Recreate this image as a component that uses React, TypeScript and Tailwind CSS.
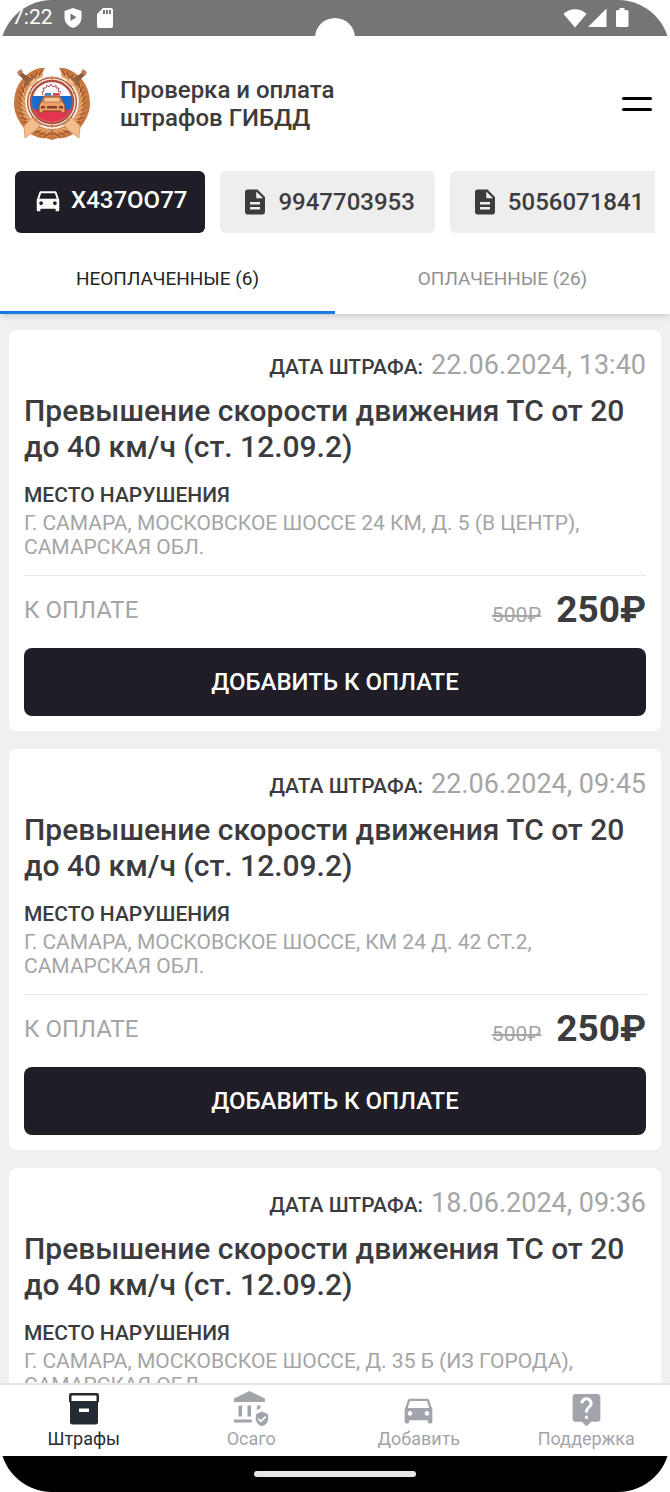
import { useState, type ReactNode } from "react";
import clsx from "clsx";
import { MdDescription, MdDirectionsCar, MdLiveHelp, MdSdCard } from "react-icons/md";

interface Fine {
  id: number;
  date: string;
  title: string;
  place: string;
  fullPrice: number;
  price: number;
}

const documents = [
  { number: "Х437ОО77", type: "car" },
  { number: "9947703953", type: "license" },
  { number: "5056071841", type: "license" },
];

const fines: Fine[] = [
  {
    id: 1,
    date: "22.06.2024, 13:40",
    title: "Превышение скорости движения ТС от 20 до 40 км/ч (ст. 12.09.2)",
    place: "Г. Самара, Московское шоссе 24 км, д. 5 (в центр), Самарская обл.",
    fullPrice: 500,
    price: 250,
  },
  {
    id: 2,
    date: "22.06.2024, 09:45",
    title: "Превышение скорости движения ТС от 20 до 40 км/ч (ст. 12.09.2)",
    place: "Г. Самара, Московское шоссе, км 24 д. 42 ст.2, Самарская обл.",
    fullPrice: 500,
    price: 250,
  },
  {
    id: 3,
    date: "18.06.2024, 09:36",
    title: "Превышение скорости движения ТС от 20 до 40 км/ч (ст. 12.09.2)",
    place: "Г. Самара, Московское шоссе, д. 35 Б (из города), Самарская обл.",
    fullPrice: 500,
    price: 250,
  },
];

const leaves = Array.from({ length: 18 }, (_, i) => i);

function Emblem() {
  return (
    <svg viewBox="0 0 76 72" className="h-[72px] w-[76px] shrink-0" aria-hidden="true">
      {[1, -1].map((side) => (
        <g key={side} transform={side === 1 ? undefined : "translate(76 0) scale(-1 1)"}>
          {/* wreath half */}
          <path d="M31 0C25-1 19 2 15 5 6 11 0 22 0 36c0 9 5 19 12 26 6 6 14 9 20 8l6 2V59C22 60 12 49 12 34c0-11 5-20 14-25z" fill="#c8773e" />
          {leaves.map((i) => (
            <g key={i} transform={`rotate(${-22 - i * 8.8} 38 35)`}>
              <path d="M33 10c0-4 4-8 8-8 0 4-3 7-8 8z" fill="#e3a166" />
              <path d="M33 5c2-3 5-5 9-5-1 3-4 5-9 5z" fill="#d98c4d" />
              <path d="M33 10c1-4 4-6 8-8M33 5c3-1 6-3 8-5" fill="none" stroke="#8f4526" strokeWidth=".8" />
            </g>
          ))}
        </g>
      ))}
      <circle cx="38" cy="34" r="27" fill="#fbeee2" />
      {/* crossed swords */}
      {[1, -1].map((side) => (
        <g key={side} transform={side === 1 ? undefined : "translate(76 0) scale(-1 1)"}>
          <path d="m14 13 5-4 47 49-1 12-11-8z" fill="#f4bd8d" stroke="#cf8b58" strokeWidth=".7" />
          <path d="m6 3 11 8-4 4L4 6z" fill="#8e5b3c" />
          <path d="m3 4 4-3 2 3-4 4z" fill="#b98058" />
          <path d="m10 16 9-9 2 2-9 10z" fill="#9d6440" />
        </g>
      ))}
      {/* shield with flag */}
      <circle cx="38" cy="34" r="25" fill="#a04a33" />
      <circle cx="38" cy="34" r="23" fill="none" stroke="#f4ddd0" strokeWidth="1.6" />
      <circle cx="38" cy="34" r="20.5" fill="#fff" stroke="#b65a45" strokeWidth="1.4" />
      <path d="M18.6 28h38.8a20 20 0 0 1-1 14H19.6a20 20 0 0 1-1-14z" fill="#1b6cd0" />
      <path d="M19.5 41.500h37a20 20 0 0 1-37 0z" fill="#e5344f" />
      {[
        [38, 10],
        [16, 25],
        [60, 25],
        [22, 52],
        [54, 52],
        [38, 58],
      ].map(([cx, cy]) => (
        <circle key={`${cx}-${cy}`} cx={cx} cy={cy} r="1.7" fill="#c47745" stroke="#f0c299" strokeWidth=".5" />
      ))}
      {/* car */}
      <path
        d="m29 27-1-3 2-1-1-3 3 0 1-3 2 2 2-3 2 3 3-2 0 3 3 0-1 3 3 1-2 3"
        fill="#fff"
        stroke="#c0475a"
        strokeWidth="1"
      />
      <path d="M31 25h6v2.500h-6z" fill="#2f87d7" />
      <path d="M39 25h6v2.500h-6z" fill="#e5405d" />
      <path d="m30 28-3 6-2 3v8h4v-2h18v2h4v-8l-2-3-3-6z" fill="#e9a264" stroke="#85402a" />
      <path d="m31 29.500-2 4.500h18l-2-4.500z" fill="#f5c593" stroke="#9b5430" strokeWidth=".6" />
      <path d="M27 38h4v2.500h-4zm18 0h4v2.500h-4zM33 38h10v2.500H33z" fill="#8f3931" />
    </svg>
  );
}

function ArchiveIcon() {
  return (
    <svg viewBox="0 0 32 32" className="size-8" fill="currentColor" aria-hidden="true">
      <path
        fillRule="evenodd"
        d="M3 0h26a2 2 0 0 1 2 2v6a2 2 0 0 1-1 1.700V29a2.500 2.500 0 0 1-2.500 2.500h-23A2.500 2.500 0 0 1 2 29V9.700A2 2 0 0 1 1 8V2a2 2 0 0 1 2-2zm.5 2.500v5.500h25V2.500zM11 15.500v3.500h10v-3.500z"
      />
    </svg>
  );
}

function InsuranceIcon() {
  return (
    <svg viewBox="0 0 36 36" className="size-9" fill="currentColor" aria-hidden="true">
      <path d="M16.500 0 32 7.500V11H1V7.500zM5.500 14.500h3.500v11H5.500zm9 0H18v11h-3.500zm9.500 0h3.500V17L24 19zM1 28.500h17.500c0 1.200.300 2.200.900 3H1z" />
      <path d="m29 20.500 6.200 2.700v4.300c0 3.600-2.500 6.800-6.200 7.800-3.700-1-6.200-4.200-6.200-7.800v-4.300z" />
      <path d="m25.500 27.800 2.500 2.500 4.700-4.700" fill="none" stroke="#fff" strokeWidth="1.8" />
    </svg>
  );
}

function StatusBar() {
  return (
    <div className="relative flex h-9 shrink-0 items-center justify-between bg-[#757575] pr-[41px] pl-3 text-white">
      <div className="flex items-center">
        <span className="text-[21px]">7:22</span>
        <svg viewBox="0 0 20 22" className="ml-2.5 h-[22px] w-5" aria-hidden="true">
          <path d="m10 1 8.500 3v6.500c0 5-3.500 9-8.500 10.500C5 19.500 1.500 15.500 1.500 10.500V4z" fill="currentColor" />
          <path d="M7.500 6.500v7.500l6-3.750z" fill="#757575" />
        </svg>
        <MdSdCard className="ml-2.5 size-6" />
      </div>
      <div className="flex items-center">
        <svg viewBox="0 0 24 20" className="h-5 w-6" fill="currentColor" aria-hidden="true">
          <path d="M.5 6C6-.500 18-.500 23.500 6L12 19.500z" />
        </svg>
        <svg viewBox="0 0 20 20" className="h-5 w-5" fill="currentColor" aria-hidden="true">
          <path d="M19.500.500v18.500H1z" />
        </svg>
        <svg viewBox="0 0 14 20" className="ml-2 h-5 w-3.5" fill="currentColor" aria-hidden="true">
          <path d="M4.500 0h5v2H12a1.500 1.500 0 0 1 1.500 1.500v14A1.500 1.500 0 0 1 12 19H2.500A1.500 1.500 0 0 1 1 17.500v-14A1.500 1.500 0 0 1 2.500 2h2z" />
        </svg>
      </div>
      {/* camera cutout */}
      <div className="absolute top-[18px] left-1/2 size-10 -translate-x-1/2 rounded-full bg-white" />
    </div>
  );
}

function FineCard({ fine }: { fine: Fine }) {
  return (
    <article className="shrink-0 rounded-lg bg-white p-[15px] pt-[17px]">
      <div className="flex items-baseline justify-end gap-2 leading-9">
        <span className="text-[21px] font-medium uppercase">Дата штрафа:</span>
        <time className="text-[27px] text-[#a5a5a5]">{fine.date}</time>
      </div>
      <h2 className="mt-2 text-[30px] leading-9 font-medium">{fine.title}</h2>
      <h3 className="mt-[18px] text-[21px] leading-6 font-medium uppercase">Место нарушения</h3>
      <p className="mt-1 text-[21px] leading-6 text-[#a5a5a5] uppercase">{fine.place}</p>
      <div className="mt-4 flex h-[73px] items-center justify-between border-t border-[#e8e8e8] pb-1">
        <span className="text-2xl text-[#a5a5a5] uppercase">К оплате</span>
        <div className="flex items-baseline gap-[15px]">
          <s className="text-[21px] text-[#a5a5a5]">{fine.fullPrice}₽</s>
          <strong className="text-[37px] font-bold">{fine.price}₽</strong>
        </div>
      </div>
      <button type="button" className="h-[68px] w-full rounded-lg bg-[#201d26] text-2xl font-medium text-white uppercase">
        Добавить к оплате
      </button>
    </article>
  );
}

function NavItem({ label, active, children }: { label: string; active?: boolean; children: ReactNode }) {
  return (
    <a
      href="#"
      className={clsx(
        "flex flex-1 flex-col items-center pt-1.5 text-lg",
        active ? "text-[#222b31]" : "text-[#a2a4ab]"
      )}
    >
      <span className="flex h-9 items-center justify-center">{children}</span>
      <span className="leading-6">{label}</span>
    </a>
  );
}

export default function App() {
  const [selected, setSelected] = useState(0);
  const [tab, setTab] = useState("unpaid");

  return (
    <div className="flex h-screen flex-col overflow-hidden rounded-[52px] bg-white font-[Roboto,sans-serif] text-[#3c3c3e]">
      <StatusBar />

      <header className="flex shrink-0 items-center pt-8 pr-[18px] pb-[31px] pl-3.5">
        <Emblem />
        <h1 className="ml-[30px] text-2xl leading-7 font-medium">
          Проверка и оплата
          <br />
          штрафов ГИБДД
        </h1>
        <button type="button" aria-label="Меню" className="ml-auto flex flex-col gap-2 py-3">
          <span className="h-[3px] w-[30px] rounded-full bg-black" />
          <span className="h-[3px] w-[30px] rounded-full bg-black" />
        </button>
      </header>

      <div className="mx-[15px] flex shrink-0 gap-[15px] overflow-hidden">
        {documents.map((doc, i) => (
          <button
            key={doc.number}
            type="button"
            onClick={() => setSelected(i)}
            className={clsx(
              "flex h-[62px] shrink-0 items-center gap-2 rounded-md text-2xl font-medium",
              i === selected ? "bg-[#201d26] px-[18px] pb-1 text-white" : "bg-[#eeeeee] px-5"
            )}
          >
            {doc.type === "car" ? <MdDirectionsCar className="size-[30px]" /> : <MdDescription className="size-[30px]" />}
            {doc.number}
          </button>
        ))}
      </div>

      <div role="tablist" className="relative z-10 mt-3 flex h-[69px] shrink-0 bg-white text-[19px] shadow-md">
        <button
          type="button"
          role="tab"
          aria-selected={tab === "unpaid"}
          onClick={() => setTab("unpaid")}
          className={clsx(
            "flex-1 border-b-3 pt-0.5 uppercase",
            tab === "unpaid" ? "border-[#177be6] text-[#242424]" : "border-transparent text-[#929292]"
          )}
        >
          Неоплаченные (6)
        </button>
        <button
          type="button"
          role="tab"
          aria-selected={tab === "paid"}
          onClick={() => setTab("paid")}
          className={clsx(
            "flex-1 border-b-3 pt-0.5 uppercase",
            tab === "paid" ? "border-[#177be6] text-[#242424]" : "border-transparent text-[#929292]"
          )}
        >
          Оплаченные (26)
        </button>
      </div>

      <main className="flex min-h-0 flex-1 flex-col gap-[18px] overflow-hidden bg-[#f0f0f0] px-[9px] pt-4">
        {fines.map((fine) => (
          <FineCard key={fine.id} fine={fine} />
        ))}
      </main>

      <nav className="relative flex h-[73px] shrink-0 border-t-2 border-[#e6e6e6] bg-white">
        <NavItem label="Штрафы" active>
          <ArchiveIcon />
        </NavItem>
        <NavItem label="Осаго">
          <InsuranceIcon />
        </NavItem>
        <NavItem label="Добавить">
          <MdDirectionsCar className="size-[37px]" />
        </NavItem>
        <NavItem label="Поддержка">
          <MdLiveHelp className="size-[37px]" />
        </NavItem>
      </nav>

      <div className="flex h-9 shrink-0 items-center justify-center bg-black">
        <div className="h-1.5 w-[162px] rounded-full bg-[#e6e6e6]" />
      </div>
    </div>
  );
}
